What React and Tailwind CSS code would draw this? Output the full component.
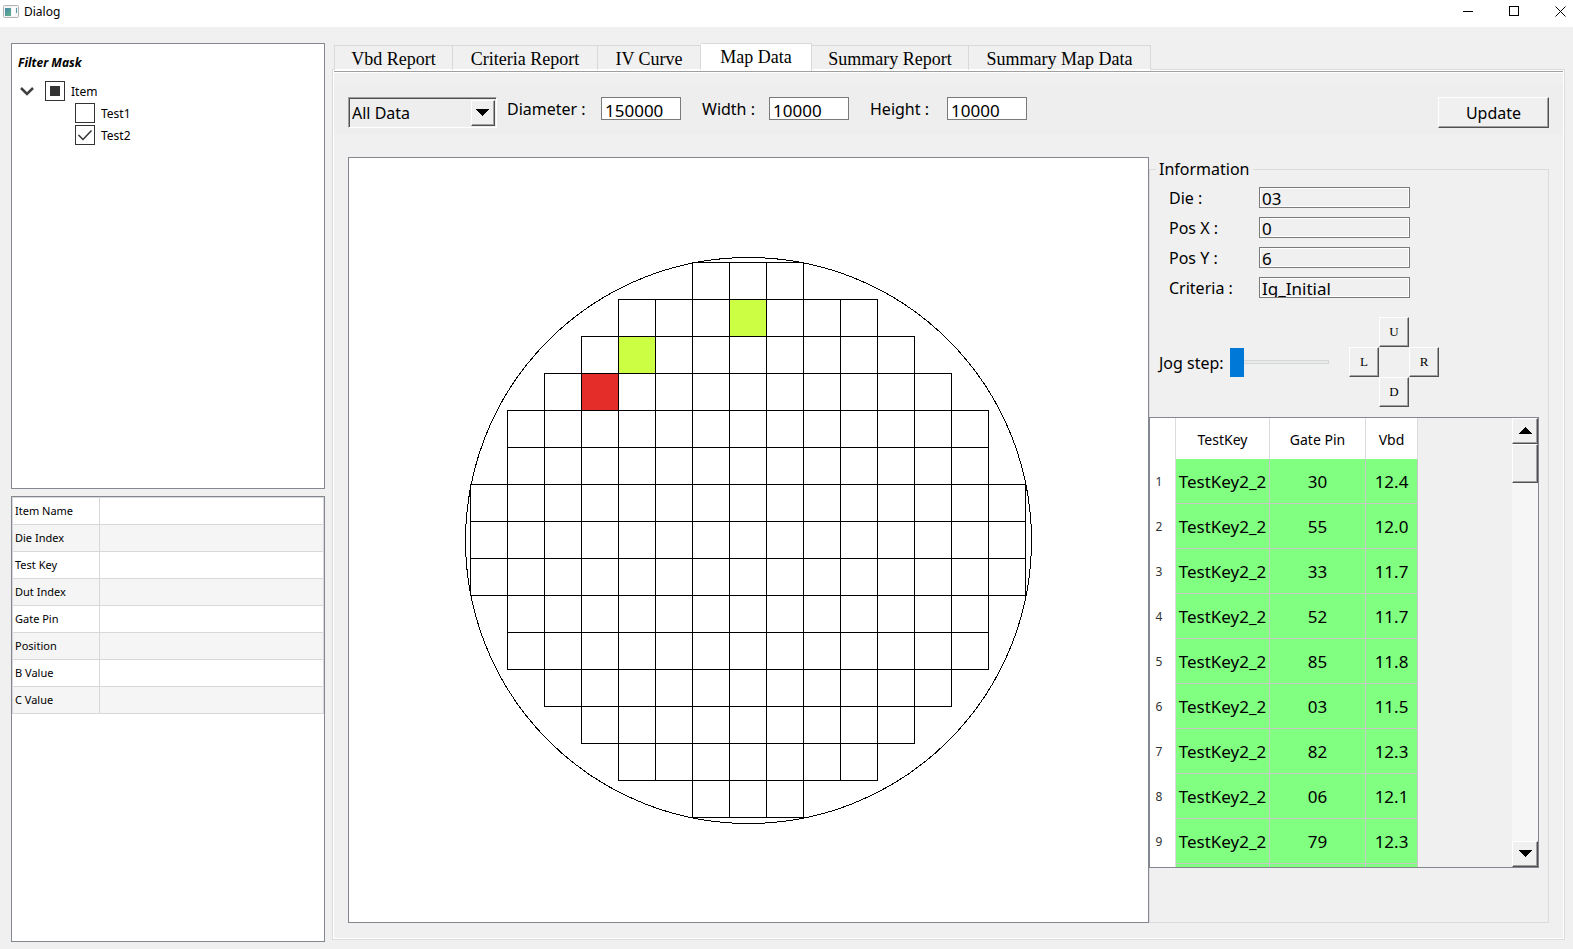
import React, { useState } from "react";

const tabs = [
  { name: "Vbd Report", width: "w-[119px]" },
  { name: "Criteria Report", width: "w-[145px]" },
  { name: "IV Curve", width: "w-[103px]" },
  { name: "Map Data", width: "w-[111px]" },
  { name: "Summary Report", width: "w-[157px]" },
  { name: "Summary Map Data", width: "w-[182px]" },
];

const properties = [
  "Item Name",
  "Die Index",
  "Test Key",
  "Dut Index",
  "Gate Pin",
  "Position",
  "B Value",
  "C Value",
];

const info = [
  { id: "die", label: "Die :", value: "03" },
  { id: "posx", label: "Pos X :", value: "0" },
  { id: "posy", label: "Pos Y :", value: "6" },
  { id: "criteria", label: "Criteria :", value: "Ig_Initial" },
];

const results = [
  ["1", "TestKey2_2", "30", "12.4"],
  ["2", "TestKey2_2", "55", "12.0"],
  ["3", "TestKey2_2", "33", "11.7"],
  ["4", "TestKey2_2", "52", "11.7"],
  ["5", "TestKey2_2", "85", "11.8"],
  ["6", "TestKey2_2", "03", "11.5"],
  ["7", "TestKey2_2", "82", "12.3"],
  ["8", "TestKey2_2", "06", "12.1"],
  ["9", "TestKey2_2", "79", "12.3"],
  ["", "", "", ""],
];

// first column of every wafer row, rows are symmetric around column 7
const rowStart = [6, 4, 3, 2, 1, 1, 0, 0, 0, 1, 1, 2, 3, 4, 6];
const CELL = 37;

const dieColor = {
  "7,1": "#ccff44",
  "4,2": "#ccff44",
  "3,3": "#e42d28",
};

const raised =
  "bg-[#f0f0f0] border border-t-white border-l-white border-r-[#505050] border-b-[#505050] shadow-[inset_-1px_-1px_0_#a0a0a0]";

const Arrow = ({ up }) => (
  <svg width="13" height="7" viewBox="0 0 13 7" shapeRendering="crispEdges" aria-hidden="true">
    <path d={up ? "M0 7L6.5 0L13 7Z" : "M0 0L6.5 7L13 0Z"} fill="#000" />
  </svg>
);

const TitleBar = () => (
  <header className="flex h-[27px] items-center bg-white pr-[7px] pb-1 pl-[3px]">
    <svg width="16" height="13" viewBox="0 0 16 13" aria-hidden="true">
      <defs>
        <linearGradient id="appicon" x1="0" y1="0" x2="1" y2="1">
          <stop offset="0" stopColor="#4a86a8" />
          <stop offset="1" stopColor="#5fb58c" />
        </linearGradient>
      </defs>
      <rect x="0.5" y="0.5" width="15" height="12" rx="1" fill="#f4f4f4" stroke="#b4b4b4" />
      <rect x="2" y="3" width="6" height="8" fill="url(#appicon)" />
      <rect x="9" y="2" width="3" height="9" fill="#ffffff" />
      <rect x="13" y="3" width="1" height="5" fill="#5a9aa8" />
    </svg>
    <h1 className="ml-[5px] flex-1 text-[12px]">Dialog</h1>
    <div className="flex gap-[35px]">
      <button aria-label="Minimize">
        <svg width="11" height="11" viewBox="0 0 11 11">
          <path d="M0 5.5H10" stroke="#000" />
        </svg>
      </button>
      <button aria-label="Maximize">
        <svg width="11" height="11" viewBox="0 0 11 11">
          <rect x="0.5" y="0.5" width="9" height="9" fill="none" stroke="#000" />
        </svg>
      </button>
      <button aria-label="Close">
        <svg width="11" height="11" viewBox="0 0 11 11">
          <path d="M0.5 0.5L10.5 10.5M10.5 0.5L0.5 10.5" stroke="#000" />
        </svg>
      </button>
    </div>
  </header>
);

const TreeCheck = ({ id, label, checked, partial, onChange }) => (
  <div className="flex h-[22px] items-center gap-[6px]">
    <span className="grid size-5">
      <input
        id={id}
        type="checkbox"
        checked={checked}
        onChange={onChange}
        className="col-start-1 row-start-1 size-5 appearance-none border border-[#333] bg-white"
      />
      <svg
        viewBox="0 0 20 20"
        className="pointer-events-none col-start-1 row-start-1 size-5"
        aria-hidden="true"
      >
        {partial && <rect x="5" y="5" width="10" height="10" fill="#333" />}
        {checked && !partial && (
          <path d="M3.5 10L8 14.5L16.5 5.5" fill="none" stroke="#333" strokeWidth="1.5" />
        )}
      </svg>
    </span>
    <label htmlFor={id} className="pt-[2px] text-[12px]">
      {label}
    </label>
  </div>
);

const FilterTree = () => {
  const [tests, setTests] = useState([false, true]);
  const all = tests.every(Boolean);
  const some = tests.some(Boolean);

  return (
    <section className="border border-[#828790] bg-white px-[6px] pt-[10px]">
      <h2 className="text-[12px] leading-[18px] font-bold italic">Filter Mask</h2>
      <div className="mt-[8px] flex items-center">
        <button aria-label="Collapse" className="mr-[11px] ml-[2px]">
          <svg width="14" height="9" viewBox="0 0 14 9">
            <path d="M1 1L7 7L13 1" fill="none" stroke="#404040" strokeWidth="2.5" />
          </svg>
        </button>
        <TreeCheck
          id="item"
          label="Item"
          checked={some}
          partial={some && !all}
          onChange={() => setTests([!all, !all])}
        />
      </div>
      <div className="ml-[57px]">
        {tests.map((on, i) => (
          <TreeCheck
            key={i}
            id={`test${i + 1}`}
            label={`Test${i + 1}`}
            checked={on}
            onChange={() => setTests(tests.map((t, j) => (j === i ? !t : t)))}
          />
        ))}
      </div>
    </section>
  );
};

const PropertyTable = () => (
  <section className="border border-[#828790] bg-white">
    <table className="w-full table-fixed border-collapse border border-[#d8d8d8] text-[11px]">
      <tbody>
        {properties.map((name) => (
          <tr key={name} className="h-[27px] even:bg-[#f5f5f5]">
            <th className="w-[87px] border border-[#d8d8d8] px-[2px] text-left font-normal">
              {name}
            </th>
            <td className="border border-[#d8d8d8]"></td>
          </tr>
        ))}
      </tbody>
    </table>
  </section>
);

const SizeField = ({ id, label, value, className }) => (
  <>
    <label htmlFor={id} className={`pt-px ${className}`}>
      {label}
    </label>
    <input
      id={id}
      defaultValue={value}
      className="h-[23px] w-20 border border-[#7a7a7a] bg-white px-[3px] pt-[3px] text-[17px]"
    />
  </>
);

const Toolbar = () => (
  <div className="mt-[10px] flex h-[51px] items-start bg-[#eeeeee] pt-[14px] pr-[14px] pl-[14px] text-[16px] leading-[23px]">
    <div className="grid h-[31px] w-[149px] border border-t-[#a0a0a0] border-r-white border-b-white border-l-[#a0a0a0] shadow-[inset_1px_1px_0_#505050]">
      <select
        aria-label="Data set"
        className="col-start-1 row-start-1 appearance-none bg-transparent pt-px pl-[3px]"
      >
        <option>All Data</option>
      </select>
      <span
        className={`pointer-events-none col-start-1 row-start-1 mt-[2px] mr-[1px] mb-[1px] flex w-6 items-center justify-center justify-self-end pr-px pb-[2px] ${raised}`}
      >
        <Arrow />
      </span>
    </div>
    <SizeField id="diameter" label="Diameter :" value="150000" className="ml-[10px] w-[94px]" />
    <SizeField id="width" label="Width :" value="10000" className="ml-[21px] w-[67px]" />
    <SizeField id="height" label="Height :" value="10000" className="ml-[21px] w-[77px]" />
    <button className={`ml-auto h-[31px] w-[111px] pt-px ${raised}`}>Update</button>
  </div>
);

const WaferMap = () => (
  <div className="flex flex-1 items-center justify-center border border-[#828790] bg-white">
    <svg
      width="567"
      height="567"
      viewBox="0 0 567 567"
      shapeRendering="crispEdges"
      role="img"
      aria-label="Wafer map"
    >
      <circle cx="283.5" cy="283.5" r="283" fill="none" stroke="#000" />
      {rowStart.map((start, row) =>
        Array.from({ length: 15 - start * 2 }, (_, i) => {
          const col = start + i;
          return (
            <rect
              key={`${col},${row}`}
              x={5.5 + col * CELL}
              y={5.5 + row * CELL}
              width={CELL}
              height={CELL}
              fill={dieColor[`${col},${row}`] || "none"}
              stroke="#000"
            />
          );
        })
      )}
    </svg>
  </div>
);

const JogButton = ({ children, place }) => (
  <button
    className={`size-[30px] font-['Liberation_Serif',serif] text-[13px] ${raised} ${place}`}
  >
    {children}
  </button>
);

const JogPanel = () => (
  <div className="mt-[19px] flex h-[90px] items-center pl-[9px]">
    <label htmlFor="jog" className="w-[71px] pt-[2px]">
      Jog step:
    </label>
    <input
      id="jog"
      type="range"
      min="0"
      max="10"
      defaultValue="0"
      className="h-[29px] w-[99px] appearance-none bg-transparent [&::-webkit-slider-runnable-track]:h-1 [&::-webkit-slider-runnable-track]:border [&::-webkit-slider-runnable-track]:border-[#d6d6d6] [&::-webkit-slider-runnable-track]:bg-[#e7eaea] [&::-webkit-slider-thumb]:-mt-[13px] [&::-webkit-slider-thumb]:-ml-px [&::-webkit-slider-thumb]:h-[29px] [&::-webkit-slider-thumb]:w-[14px] [&::-webkit-slider-thumb]:appearance-none [&::-webkit-slider-thumb]:bg-[#0078d7]"
    />
    <div className="ml-5 grid grid-cols-3 grid-rows-3">
      <JogButton place="col-start-2 row-start-1">U</JogButton>
      <JogButton place="col-start-1 row-start-2">L</JogButton>
      <JogButton place="col-start-3 row-start-2">R</JogButton>
      <JogButton place="col-start-2 row-start-3">D</JogButton>
    </div>
  </div>
);

const ResultTable = () => (
  <div className="mt-[10px] mr-[9px] -ml-px flex h-[451px] overflow-hidden border border-[#828790]">
    <table className="w-[268px] table-fixed border-separate border-spacing-0 self-start text-center text-[17px]">
      <thead>
        <tr className="h-[41px] bg-white text-[14px]">
          <th className="w-[26px] border-r border-[#dcdcdc]"></th>
          <th className="w-[94px] border-r border-[#dcdcdc] p-0 pt-px font-normal">TestKey</th>
          <th className="w-[96px] border-r border-[#dcdcdc] p-0 pt-px font-normal">Gate Pin</th>
          <th className="border-r border-[#dcdcdc] p-0 pt-px font-normal">Vbd</th>
        </tr>
      </thead>
      <tbody>
        {results.map(([no, key, pin, vbd], i) => (
          <tr key={i} className="h-[45px] bg-[#80ff80]">
            <th className="border-r border-[#dcdcdc] bg-white p-0 pr-[7px] text-[12px] font-normal text-[#333]">
              {no}
            </th>
            <td className="border-r border-b border-[#c8c8c8] p-0 pt-[2px]">{key}</td>
            <td className="border-r border-b border-[#c8c8c8] p-0 pt-[2px]">{pin}</td>
            <td className="border-r border-b border-[#c8c8c8] p-0 pt-[2px]">{vbd}</td>
          </tr>
        ))}
      </tbody>
    </table>
    <div className="ml-auto flex w-[26px] flex-col bg-[#f6f6f6]">
      <button
        aria-label="Scroll up"
        className={`flex h-[26px] items-center justify-center pb-[2px] ${raised}`}
      >
        <Arrow up />
      </button>
      <div className={`h-[39px] ${raised}`}></div>
      <button
        aria-label="Scroll down"
        className={`mt-auto flex h-[26px] items-center justify-center pb-[2px] ${raised}`}
      >
        <Arrow />
      </button>
    </div>
  </div>
);

const InfoPanel = () => (
  <fieldset className="mt-[1px] w-[400px] min-w-0 shrink-0 border border-[#dcdcdc] text-[16px]">
    <legend className="ml-[6px] px-[3px] leading-[22px]">Information</legend>
    <div className="mt-[7px] flex flex-col gap-[9px]">
      {info.map(({ id, label, value }) => (
        <div key={id} className="flex h-[21px] items-center pl-[19px]">
          <label htmlFor={id} className="w-[90px]">
            {label}
          </label>
          <input
            id={id}
            readOnly
            value={value}
            className="h-[21px] w-[151px] border border-[#7a7a7a] bg-[#f0f0f0] px-[2px] pt-[2px] text-[17px] shadow-[inset_0_0_0_1px_#fff]"
          />
        </div>
      ))}
    </div>
    <JogPanel />
    <ResultTable />
  </fieldset>
);

const App = () => {
  const [active, setActive] = useState("Map Data");

  return (
    <div className="flex min-h-screen flex-col bg-[#f0f0f0] font-['Noto_Sans',sans-serif] text-black">
      <TitleBar />
      <main className="flex flex-1 gap-[7px] pt-4 pr-2 pb-[7px] pl-[11px]">
        <aside className="grid w-[314px] shrink-0 grid-rows-2 gap-[7px]">
          <FilterTree />
          <PropertyTable />
        </aside>
        <div className="mb-[2px] flex min-w-0 flex-1 flex-col">
          <nav
            role="tablist"
            className="z-10 -mb-[2px] ml-[2px] flex h-7 items-end font-['Liberation_Serif',serif] text-[18px]"
          >
            {tabs.map(({ name, width }) => (
              <button
                key={name}
                role="tab"
                aria-selected={name === active}
                onClick={() => setActive(name)}
                className={`border-t border-r border-[#d9d9d9] whitespace-nowrap ${width} ${
                  name === active
                    ? "h-7 bg-white"
                    : "h-[26px] border-b-2 border-b-white bg-[#f0f0f0] first:border-l"
                }`}
              >
                {name}
              </button>
            ))}
          </nav>
          <div className="flex flex-1 flex-col border border-[#dcdcdc]">
            <div className="flex flex-1 flex-col border border-white">
              <div className="border-t border-b border-t-[#a0a0a0] border-b-white"></div>
              <Toolbar />
              <div className="mt-[23px] mr-[14px] mb-[15px] ml-[14px] flex flex-1">
                <WaferMap />
                <InfoPanel />
              </div>
            </div>
          </div>
        </div>
      </main>
    </div>
  );
};

export default App;
